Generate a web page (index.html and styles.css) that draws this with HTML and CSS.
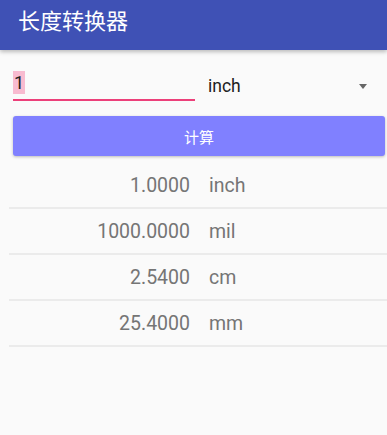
FILE: index.html
```html
<!DOCTYPE html>
<html lang="zh-CN">
<head>
    <meta charset="UTF-8">
    <meta name="viewport" content="width=device-width, initial-scale=1.0">
    <title>长度转换器</title>
    <link rel="stylesheet" href="styles.css">
</head>
<body>

<div class="app-bar">
    <span class="app-title">长度转换器</span>
</div>

<div class="input-row">
    <div class="edit-field"><span class="selected">1</span></div>
    <div class="spinner">
        <span class="spinner-text">inch</span>
        <span class="spinner-arrow"></span>
    </div>
</div>

<button class="calc-button">计算</button>

<div class="result-list">
    <div class="result-row">
        <span class="result-value">1.0000</span>
        <span class="result-unit">inch</span>
    </div>
    <div class="result-row">
        <span class="result-value">1000.0000</span>
        <span class="result-unit">mil</span>
    </div>
    <div class="result-row">
        <span class="result-value">2.5400</span>
        <span class="result-unit">cm</span>
    </div>
    <div class="result-row">
        <span class="result-value">25.4000</span>
        <span class="result-unit">mm</span>
    </div>
</div>

</body>
</html>
```

FILE: styles.css
```css
body {
    font-family: Roboto, "Noto Sans CJK SC", sans-serif;
    background-color: #fafafa;
    margin: 0;
    width: 387px;
    height: 435px;
    overflow: hidden;
}
.app-bar {
    height: 50px;
    background-color: #3f51b5;
    box-shadow: 0 2px 4px rgba(0, 0, 0, 0.25);
    padding: 8px 0 0 18px;
    box-sizing: border-box;
}
.app-title {
    color: #ffffff;
    font-size: 22px;
    line-height: 28px;
}
.input-row {
    display: flex;
    align-items: flex-end;
    margin-top: 18px;
    padding-left: 13px;
}
.edit-field {
    width: 182px;
    padding-bottom: 5px;
    border-bottom: 2px solid #ec407a;
    font-size: 18px;
    line-height: 23px;
    color: #212121;
}
.edit-field .selected {
    display: inline-block;
    background-color: #f8bbd0;
    padding: 0 1px;
}
.spinner {
    flex: 1;
    display: flex;
    align-items: center;
    justify-content: space-between;
    box-sizing: border-box;
    margin-left: 13px;
    padding: 4px 20px 0 0;
    height: 32px;
    margin-bottom: 1px;
}
.spinner-text {
    font-size: 17.5px;
    color: #212121;
}
.spinner-arrow {
    width: 0;
    height: 0;
    border-left: 4.5px solid transparent;
    border-right: 4.5px solid transparent;
    border-top: 5px solid #666666;
}
.calc-button {
    display: block;
    width: 372px;
    height: 40px;
    margin: 15px 0 0 13px;
    border: none;
    border-radius: 3px;
    background-color: #8080ff;
    box-shadow: 0 1px 3px rgba(0, 0, 0, 0.25);
    color: #ffffff;
    font-family: Roboto, "Noto Sans CJK SC", sans-serif;
    font-size: 15px;
    padding: 0;
}
.result-list {
    margin: 7px 0 0 9px;
}
.result-row {
    display: grid;
    grid-template-columns: 181px auto;
    column-gap: 19px;
    align-items: center;
    height: 44px;
    border-bottom: 2px solid #ebebeb;
    font-size: 19.5px;
    color: #757575;
}
.result-value {
    text-align: right;
}
```
